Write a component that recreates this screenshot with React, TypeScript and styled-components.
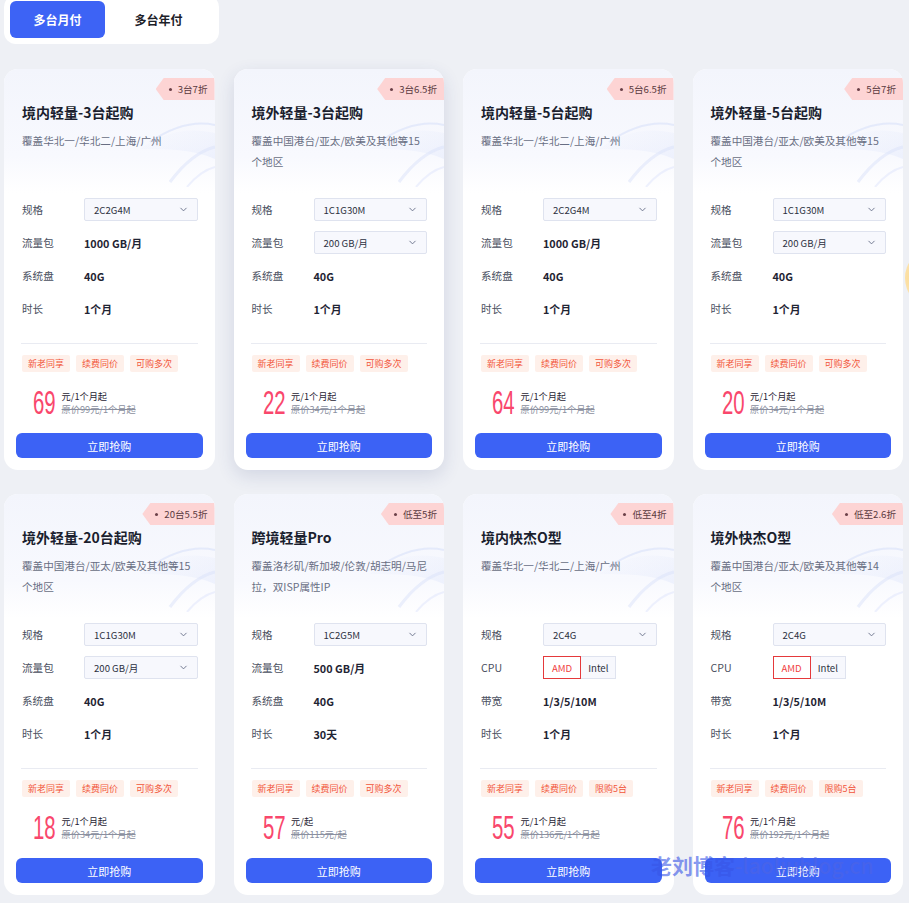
import React from "react";
import styled, { createGlobalStyle, css } from "styled-components";
import { ChevronDown } from "lucide-react";

const GlobalStyle = createGlobalStyle`
  html, body { margin: 0; padding: 0; }
  body {
    background: #eef0f5;
    font-family: "Noto Sans CJK SC", "Noto Sans", sans-serif;
    overflow: hidden;
  }
  * { box-sizing: border-box; }
`;

const Page = styled.div`
  position: relative;
  height: 903px;
  overflow: hidden;
  padding: 0 6px 0 4px;
`;

const Tabs = styled.div`
  display: flex;
  gap: 6px;
  width: 215px;
  margin-top: -5px;
  padding: 6px;
  background: #fff;
  border-radius: 12px;
`;

const Tab = styled.button<{ $active?: boolean }>`
  width: 95px;
  height: 37px;
  border: 0;
  border-radius: 6px;
  font-family: inherit;
  font-size: 12px;
  font-weight: 700;
  cursor: pointer;
  background: ${(p) => (p.$active ? "#3d63f5" : "transparent")};
  color: ${(p) => (p.$active ? "#fff" : "#1d2129")};
`;

const Grid = styled.div`
  display: grid;
  grid-template-columns: repeat(4, 1fr);
  column-gap: 19px;
  row-gap: 24px;
  margin-top: 25px;
`;

const Card = styled.div<{ $raised?: boolean }>`
  position: relative;
  height: 401px;
  background: #fff;
  border-radius: 14px;
  overflow: hidden;
  display: flex;
  flex-direction: column;
  padding-bottom: 12px;
  ${(p) =>
    p.$raised &&
    css`
      box-shadow: 0 6px 18px rgba(40, 60, 120, 0.14);
    `}
`;

const Header = styled.div`
  position: relative;
  height: 124px;
  padding: 33px 15px 0 18px;
  background: linear-gradient(180deg, #f3f5fc 0%, #f8f9fe 70%, #ffffff 100%);
`;

const Deco = styled.svg`
  position: absolute;
  right: 0;
  top: 18px;
  width: 80px;
  height: 100px;
  pointer-events: none;
`;

const Badge = styled.div`
  position: absolute;
  top: 9px;
  right: 0;
  height: 22px;
  display: flex;
  align-items: center;
  gap: 6px;
  padding: 0 7px 0 13px;
  background: #fdd4d4;
  clip-path: polygon(8px 0, 100% 0, 100% 100%, 8px 100%, 0 50%);
  font-size: 9.6px;
  color: #5a3a40;
  z-index: 2;
  &::before {
    content: "";
    width: 3px;
    height: 3px;
    border-radius: 50%;
    background: #6b4048;
  }
`;

const Title = styled.h3`
  position: relative;
  margin: 0;
  font-size: 14px;
  line-height: 20px;
  font-weight: 700;
  color: #1a1e2e;
`;

const Desc = styled.p`
  position: relative;
  margin: 8px 0 0;
  font-size: 10.6px;
  line-height: 21px;
  color: #686e83;
`;

const Specs = styled.div`
  padding: 0 17px 0 18px;
`;

const Row = styled.div`
  display: grid;
  grid-template-columns: 62px 1fr;
  align-items: center;
  height: 33px;
`;

const Label = styled.span`
  font-size: 10.6px;
  color: #4a4f60;
`;

const Value = styled.span`
  font-size: 10.8px;
  font-weight: 700;
  color: #1f2433;
`;

const Select = styled.div`
  height: 23px;
  display: flex;
  align-items: center;
  justify-content: space-between;
  padding: 0 8px 0 9px;
  background: #f7f8fd;
  border: 1px solid #dfe3ef;
  border-radius: 2px;
  font-size: 9.6px;
  color: #2b3040;
`;

const Options = styled.div`
  display: flex;
`;

const Option = styled.div<{ $active?: boolean }>`
  height: 23px;
  display: flex;
  align-items: center;
  padding: 0 ${(p) => (p.$active ? 8 : 7)}px;
  font-size: 9.6px;
  background: ${(p) => (p.$active ? "#fff" : "#f7f8fd")};
  color: ${(p) => (p.$active ? "#f0413f" : "#2b3040")};
  border: 1px solid ${(p) => (p.$active ? "#e5393b" : "#dfe3ef")};
  ${(p) => !p.$active && css`border-left: 0;`}
`;

const Divider = styled.div`
  height: 1px;
  margin: 18px 17px 0 17px;
  background: #e9ebf2;
`;

const Tags = styled.div`
  display: flex;
  gap: 6px;
  margin-top: 11px;
  padding: 0 18px;
`;

const Tag = styled.span`
  height: 17px;
  line-height: 17px;
  padding: 0 6px;
  background: #fef0ea;
  color: #f2563a;
  font-size: 9px;
  border-radius: 2px;
`;

const Price = styled.div`
  display: flex;
  align-items: center;
  margin-top: 18px;
  padding-left: 29px;
  height: 25px;
`;

const Digits = styled.span<{ $n: number }>`
  display: inline-block;
  width: ${(p) => p.$n * 11.3}px;
  font-family: "Liberation Sans", sans-serif;
  font-size: 34px;
  line-height: 25px;
  white-space: nowrap;
  color: #f9476c;
  transform: scaleX(0.6);
  transform-origin: left center;
`;

const PriceText = styled.div`
  display: flex;
  flex-direction: column;
  margin-left: 6px;
  font-size: 9.2px;
  line-height: 13px;
`;

const Now = styled.span`
  color: #1f2433;
`;

const Orig = styled.span`
  color: #8b90a0;
  text-decoration: line-through;
`;

const Footer = styled.div`
  margin-top: auto;
  padding: 0 12px;
`;

const BuyButton = styled.button`
  width: 100%;
  height: 25px;
  border: 0;
  border-radius: 6px;
  background: #3c62f5;
  color: #fff;
  font-family: inherit;
  font-size: 11px;
  cursor: pointer;
`;

const Watermark = styled.div`
  position: absolute;
  left: 651px;
  top: 850px;
  font-family: "Noto Sans CJK SC", sans-serif;
  font-size: 21px;
  font-weight: 700;
  white-space: nowrap;
  color: rgba(55, 85, 230, 0.62);
  pointer-events: none;
  z-index: 5;
`;

const WatermarkLatin = styled.span`
  font-weight: 500;
  color: rgba(80, 100, 225, 0.5);
`;

const SideBlob = styled.div`
  position: absolute;
  left: 905px;
  top: 250px;
  width: 50px;
  height: 56px;
  border-radius: 50%;
  background: radial-gradient(circle at 30% 50%, #fbd889 0%, #fde7bc 60%, #eef0f5 100%);
`;

type Spec =
  | { kind: "select"; label: string; value: string }
  | { kind: "text"; label: string; value: string }
  | { kind: "cpu"; label: string };

type Plan = {
  badge: string;
  title: string;
  desc: string;
  specs: Spec[];
  tags: string[];
  price: string;
  unit: string;
  orig: string;
};

const regionCN = "覆盖华北一/华北二/上海/广州";
const region15 = "覆盖中国港台/亚太/欧美及其他等15个地区";
const tags1 = ["新老同享", "续费同价", "可购多次"];
const tags2 = ["新老同享", "续费同价", "限购5台"];

const plans: Plan[] = [
  {
    badge: "3台7折",
    title: "境内轻量-3台起购",
    desc: regionCN,
    specs: [
      { kind: "select", label: "规格", value: "2C2G4M" },
      { kind: "text", label: "流量包", value: "1000 GB/月" },
      { kind: "text", label: "系统盘", value: "40G" },
      { kind: "text", label: "时长", value: "1个月" },
    ],
    tags: tags1,
    price: "69",
    unit: "元/1个月起",
    orig: "原价99元/1个月起",
  },
  {
    badge: "3台6.5折",
    title: "境外轻量-3台起购",
    desc: region15,
    specs: [
      { kind: "select", label: "规格", value: "1C1G30M" },
      { kind: "select", label: "流量包", value: "200 GB/月" },
      { kind: "text", label: "系统盘", value: "40G" },
      { kind: "text", label: "时长", value: "1个月" },
    ],
    tags: tags1,
    price: "22",
    unit: "元/1个月起",
    orig: "原价34元/1个月起",
  },
  {
    badge: "5台6.5折",
    title: "境内轻量-5台起购",
    desc: regionCN,
    specs: [
      { kind: "select", label: "规格", value: "2C2G4M" },
      { kind: "text", label: "流量包", value: "1000 GB/月" },
      { kind: "text", label: "系统盘", value: "40G" },
      { kind: "text", label: "时长", value: "1个月" },
    ],
    tags: tags1,
    price: "64",
    unit: "元/1个月起",
    orig: "原价99元/1个月起",
  },
  {
    badge: "5台7折",
    title: "境外轻量-5台起购",
    desc: region15,
    specs: [
      { kind: "select", label: "规格", value: "1C1G30M" },
      { kind: "select", label: "流量包", value: "200 GB/月" },
      { kind: "text", label: "系统盘", value: "40G" },
      { kind: "text", label: "时长", value: "1个月" },
    ],
    tags: tags1,
    price: "20",
    unit: "元/1个月起",
    orig: "原价34元/1个月起",
  },
  {
    badge: "20台5.5折",
    title: "境外轻量-20台起购",
    desc: region15,
    specs: [
      { kind: "select", label: "规格", value: "1C1G30M" },
      { kind: "select", label: "流量包", value: "200 GB/月" },
      { kind: "text", label: "系统盘", value: "40G" },
      { kind: "text", label: "时长", value: "1个月" },
    ],
    tags: tags1,
    price: "18",
    unit: "元/1个月起",
    orig: "原价34元/1个月起",
  },
  {
    badge: "低至5折",
    title: "跨境轻量Pro",
    desc: "覆盖洛杉矶/新加坡/伦敦/胡志明/马尼拉，双ISP属性IP",
    specs: [
      { kind: "select", label: "规格", value: "1C2G5M" },
      { kind: "text", label: "流量包", value: "500 GB/月" },
      { kind: "text", label: "系统盘", value: "40G" },
      { kind: "text", label: "时长", value: "30天" },
    ],
    tags: tags1,
    price: "57",
    unit: "元/起",
    orig: "原价115元/起",
  },
  {
    badge: "低至4折",
    title: "境内快杰O型",
    desc: regionCN,
    specs: [
      { kind: "select", label: "规格", value: "2C4G" },
      { kind: "cpu", label: "CPU" },
      { kind: "text", label: "带宽", value: "1/3/5/10M" },
      { kind: "text", label: "时长", value: "1个月" },
    ],
    tags: tags2,
    price: "55",
    unit: "元/1个月起",
    orig: "原价136元/1个月起",
  },
  {
    badge: "低至2.6折",
    title: "境外快杰O型",
    desc: "覆盖中国港台/亚太/欧美及其他等14个地区",
    specs: [
      { kind: "select", label: "规格", value: "2C4G" },
      { kind: "cpu", label: "CPU" },
      { kind: "text", label: "带宽", value: "1/3/5/10M" },
      { kind: "text", label: "时长", value: "1个月" },
    ],
    tags: tags2,
    price: "76",
    unit: "元/1个月起",
    orig: "原价192元/1个月起",
  },
];

const HeaderDeco = () => (
  <Deco viewBox="0 0 80 100" aria-hidden>
    <defs>
      <linearGradient id="dg" x1="0" y1="0" x2="1" y2="1">
        <stop offset="0" stopColor="#e3e9fb" stopOpacity="0" />
        <stop offset="1" stopColor="#dfe6fb" stopOpacity="0.9" />
      </linearGradient>
    </defs>
    <path d="M5 62 C 30 44, 55 40, 80 46 L 80 72 C 58 62, 32 62, 5 62 Z" fill="url(#dg)" opacity="0.5" />
    <path d="M15 55 C 40 38, 62 34, 80 38" stroke="#dde4fa" strokeWidth="2" fill="none" opacity="0.7" />
    <path d="M35 95 C 50 75, 64 64, 80 60" stroke="#dae2fa" strokeWidth="3" fill="none" opacity="0.5" />
    <path d="M52 100 C 62 88, 72 82, 80 80" stroke="#e3e8fb" strokeWidth="2" fill="none" opacity="0.6" />
  </Deco>
);

const PlanCard = ({ plan, raised }: { plan: Plan; raised?: boolean }) => (
  <Card $raised={raised}>
    <Header>
      <HeaderDeco />
      <Badge>{plan.badge}</Badge>
      <Title>{plan.title}</Title>
      <Desc>{plan.desc}</Desc>
    </Header>
    <Specs>
      {plan.specs.map((s) => (
        <Row key={s.label}>
          <Label>{s.label}</Label>
          {s.kind === "select" && (
            <Select>
              <span>{s.value}</span>
              <ChevronDown size={11} strokeWidth={2} color="#687089" />
            </Select>
          )}
          {s.kind === "text" && <Value>{s.value}</Value>}
          {s.kind === "cpu" && (
            <Options>
              <Option $active>AMD</Option>
              <Option>Intel</Option>
            </Options>
          )}
        </Row>
      ))}
    </Specs>
    <Divider />
    <Tags>
      {plan.tags.map((t) => (
        <Tag key={t}>{t}</Tag>
      ))}
    </Tags>
    <Price>
      <Digits $n={plan.price.length}>{plan.price}</Digits>
      <PriceText>
        <Now>{plan.unit}</Now>
        <Orig>{plan.orig}</Orig>
      </PriceText>
    </Price>
    <Footer>
      <BuyButton>立即抢购</BuyButton>
    </Footer>
  </Card>
);

export default function App() {
  return (
    <>
      <GlobalStyle />
      <Page>
        <Tabs>
          <Tab $active>多台月付</Tab>
          <Tab>多台年付</Tab>
        </Tabs>
        <Grid>
          {plans.map((p, i) => (
            <PlanCard key={p.title} plan={p} raised={i === 1} />
          ))}
        </Grid>
        <SideBlob />
        <Watermark>
          老刘博客<WatermarkLatin>-laoliublog.cn</WatermarkLatin>
        </Watermark>
      </Page>
    </>
  );
}
